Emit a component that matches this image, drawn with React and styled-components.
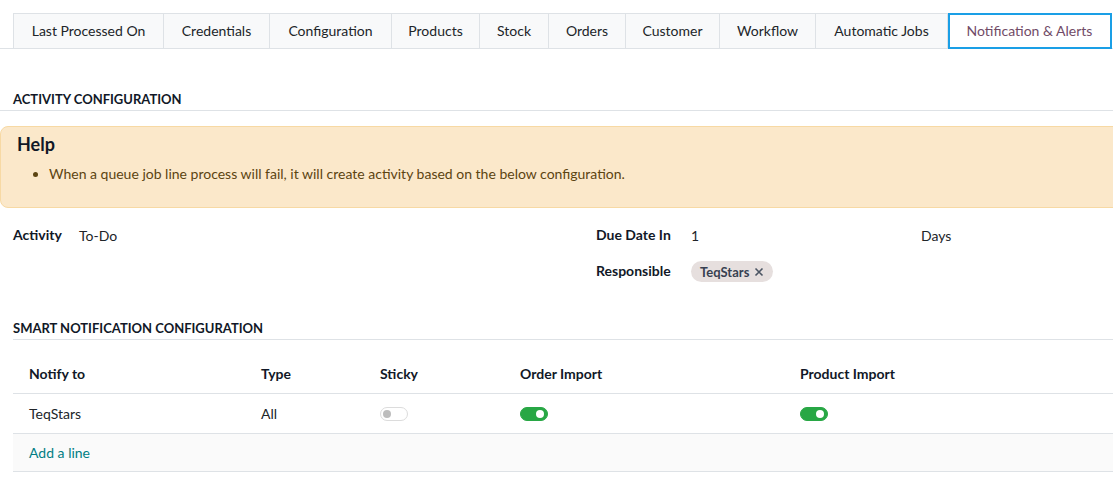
import React from "react";
import styled, { createGlobalStyle } from "styled-components";

const GlobalStyle = createGlobalStyle`
  body {
    margin: 0;
    background: #fff;
    font-family: Lato, "Open Sans", sans-serif;
    font-size: 14px;
    color: #212529;
  }
`;

const Page = styled.div`
  padding-top: 13px;
`;

const TabBar = styled.div`
  display: flex;
  padding-left: 13px;
  border-bottom: 1px solid #dee2e6;
`;

const Tab = styled.div`
  width: ${(p) => p.$w}px;
  height: 36px;
  box-sizing: border-box;
  display: flex;
  align-items: center;
  justify-content: center;
  padding-bottom: 1px;
  margin-bottom: -1px;
  border: 1px solid #dee2e6;
  border-left: ${(p) => (p.$first ? "1px solid #dee2e6" : "none")};
  background: ${(p) => (p.$active ? "#fff" : "#f8f9fa")};
  color: ${(p) => (p.$active ? "#714b67" : "#212529")};
  white-space: nowrap;
  ${(p) => p.$active && "outline: 2px solid #1a9fe6; outline-offset: -2px;"}
`;

const Section = styled.div`
  margin-top: ${(p) => p.$top}px;
`;

const SectionTitle = styled.div`
  padding-bottom: 3px;
  font-size: 13px;
  font-weight: 700;
  text-transform: uppercase;
  color: #111827;
  border-bottom: 1px solid #dee2e6;
  margin-left: ${(p) => (p.$inset ? "13px" : "0")};
  padding-left: ${(p) => (p.$inset ? "0" : "13px")};
`;

const HelpBox = styled.div`
  margin-top: 15px;
  margin-right: -10px;
  height: 82px;
  box-sizing: border-box;
  padding: 6px 16px;
  background: #fbe8ca;
  border: 1px solid #f7d9a4;
  border-radius: 8px 0 0 8px;
  color: #5c4411;
`;

const HelpTitle = styled.div`
  font-size: 18px;
  font-weight: 700;
  color: #111827;
  line-height: 22px;
`;

const HelpList = styled.ul`
  margin: 9px 0 0;
  padding-left: 32px;
  line-height: 20px;
`;

const FieldGrid = styled.div`
  display: grid;
  grid-template-columns: 583px 1fr;
  padding: 0 13px;
  margin-top: 17px;
`;

const FieldCol = styled.div`
  display: flex;
  flex-direction: column;
  gap: 16px;
`;

const Field = styled.div`
  display: flex;
  align-items: center;
  min-height: 20px;
`;

const Label = styled.div`
  width: ${(p) => p.$w}px;
  font-weight: 700;
  color: #111827;
  margin-top: -2px;
`;

const Value = styled.div`
  width: ${(p) => (p.$w ? `${p.$w}px` : "auto")};
  color: #212529;
`;

const Tag = styled.span`
  display: inline-flex;
  align-items: center;
  gap: 5px;
  height: 21px;
  padding: 0 9px;
  border-radius: 11px;
  background: #e6dfde;
  font-size: 13px;
  font-weight: 700;
  color: #374151;
`;

const Table = styled.div`
  margin-left: 13px;
  margin-top: 14px;
`;

const Row = styled.div`
  display: grid;
  grid-template-columns: 232px 119px 140px 280px 1fr;
  align-items: center;
  height: ${(p) => p.$h}px;
  box-sizing: border-box;
  padding-left: 16px;
  border-bottom: 1px solid #dee2e6;
  background: ${(p) => (p.$muted ? "#fafafa" : "#fff")};
  font-weight: ${(p) => (p.$head ? 700 : 400)};
  color: ${(p) => (p.$head ? "#111827" : "#212529")};
`;

const Cell = styled.span`
  display: flex;
  align-items: center;
`;

const AddLine = styled.span`
  color: #017e84;
`;

const Toggle = styled.span`
  position: relative;
  display: inline-block;
  width: 28px;
  height: 14px;
  box-sizing: border-box;
  border-radius: 7px;
  border: 1px solid ${(p) => (p.$on ? "#28a745" : "#dcdcdc")};
  background: ${(p) => (p.$on ? "#28a745" : "#fff")};

  &::after {
    content: "";
    position: absolute;
    top: 2px;
    left: ${(p) => (p.$on ? "15px" : "2px")};
    width: 8px;
    height: 8px;
    border-radius: 50%;
    background: ${(p) => (p.$on ? "#fff" : "#bdbdbd")};
  }
`;

const tabs = [
  ["Last Processed On", 151],
  ["Credentials", 106],
  ["Configuration", 122],
  ["Products", 88],
  ["Stock", 69],
  ["Orders", 77],
  ["Customer", 94],
  ["Workflow", 96],
  ["Automatic Jobs", 132],
  ["Notification & Alerts", 164],
];

const columns = ["Notify to", "Type", "Sticky", "Order Import", "Product Import"];

export default function App() {
  return (
    <Page>
      <GlobalStyle />
      <TabBar>
        {tabs.map(([name, w], i) => (
          <Tab key={name} $w={w} $first={i === 0} $active={i === tabs.length - 1}>
            {name}
          </Tab>
        ))}
      </TabBar>

      <Section $top={42}>
        <SectionTitle>Activity Configuration</SectionTitle>
        <HelpBox>
          <HelpTitle>Help</HelpTitle>
          <HelpList>
            <li>
              When a queue job line process will fail, it will create activity
              based on the below configuration.
            </li>
          </HelpList>
        </HelpBox>
        <FieldGrid>
          <FieldCol>
            <Field>
              <Label $w={66}>Activity</Label>
              <Value>To-Do</Value>
            </Field>
          </FieldCol>
          <FieldCol>
            <Field>
              <Label $w={95}>Due Date In</Label>
              <Value $w={230}>1</Value>
              <Value>Days</Value>
            </Field>
            <Field>
              <Label $w={95}>Responsible</Label>
              <Tag>
                TeqStars
                <svg width="10" height="10" viewBox="0 0 10 10">
                  <path d="M1.5 1.5l7 7M8.5 1.5l-7 7" stroke="#4b5563" strokeWidth="1.6" />
                </svg>
              </Tag>
            </Field>
          </FieldCol>
        </FieldGrid>
      </Section>

      <Section $top={38}>
        <SectionTitle $inset>Smart Notification Configuration</SectionTitle>
        <Table>
          <Row $head $h={40}>
            {columns.map((c) => (
              <Cell key={c}>{c}</Cell>
            ))}
          </Row>
          <Row $h={40}>
            <Cell>TeqStars</Cell>
            <Cell>All</Cell>
            <Cell><Toggle /></Cell>
            <Cell><Toggle $on /></Cell>
            <Cell><Toggle $on /></Cell>
          </Row>
          <Row $muted $h={38}>
            <AddLine>Add a line</AddLine>
          </Row>
        </Table>
      </Section>
    </Page>
  );
}
